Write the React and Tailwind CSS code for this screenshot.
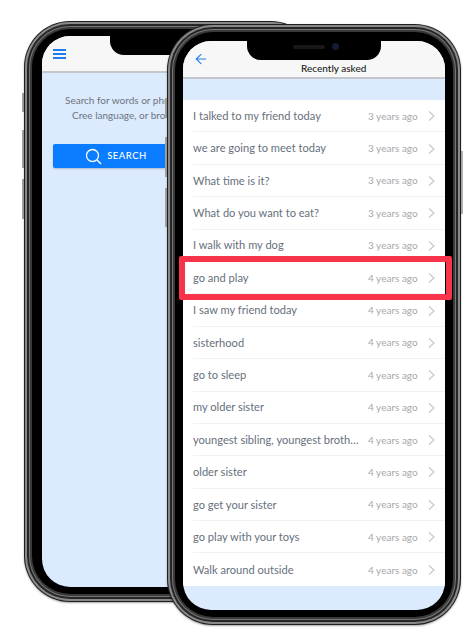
import React from 'react'
import { ArrowLeft } from 'lucide-react'

const rows = [
    ['I talked to my friend today', '3 years ago'],
    ['we are going to meet today', '3 years ago'],
    ['What time is it?', '3 years ago'],
    ['What do you want to eat?', '3 years ago'],
    ['I walk with my dog', '3 years ago'],
    ['go and play', '4 years ago'],
    ['I saw my friend today', '4 years ago'],
    ['sisterhood', '4 years ago'],
    ['go to sleep', '4 years ago'],
    ['my older sister', '4 years ago'],
    ['youngest sibling, youngest broth…', '4 years ago'],
    ['older sister', '4 years ago'],
    ['go get your sister', '4 years ago'],
    ['go play with your toys', '4 years ago'],
    ['Walk around outside', '4 years ago'],
]

const Frame = ({ className, bezel, children }) => (
    <div className={`absolute rounded-[46px] bg-[#1f1f1f] p-[1px] shadow-[0_1px_2px_rgba(0,0,0,0.35)] ${className}`}>
        <div className="h-full rounded-[45px] bg-[#8a8a8a] p-[2px]">
            <div className="h-full rounded-[43px] bg-[#262626] p-[2px]">
                <div className="h-full rounded-[41px] bg-[#777] p-[1px]">
                    <div className="h-full rounded-[40px] bg-[#3a3a3a] p-[2px]">
                        <div className={`h-full rounded-[38px] bg-black ${bezel}`}>
                            <div className="relative h-full overflow-hidden rounded-[28px] bg-[#dbeafd]">
                                {children}
                            </div>
                        </div>
                    </div>
                </div>
            </div>
        </div>
    </div>
)

const Notch = ({ className, children }) => (
    <div className={`absolute top-0 flex h-[19px] w-[134px] items-start justify-center rounded-b-[14px] bg-black ${className}`}>
        {children}
    </div>
)

const Row = ({ label, time, last }) => (
    <div className="flex h-[32.4px] items-center pl-[10px]">
        <div className={`flex h-full min-w-0 flex-1 items-center pr-[10px] pt-[1px] ${last ? '' : 'border-b border-[#f1f2f3]'}`}>
            <span className="min-w-0 flex-1 whitespace-nowrap text-[11.1px] text-[#66707c]">{label}</span>
            <span className="w-[60px] shrink-0 text-[10px] text-[#a6a8ab]">{time}</span>
            <svg width="7" height="10" viewBox="0 0 7 10" fill="none" stroke="#c6c7c9" strokeWidth="1.1" className="shrink-0">
                <path d="M1 .5 6 5 1 9.5" />
            </svg>
        </div>
    </div>
)

const BackPhone = () => (
    <Frame className="left-[24px] top-[21px] h-[581px] w-[293px]" bezel="px-[10px] py-[7px]">
        <div className="flex h-[37px] items-center border-b-2 border-[#c3c7cc] bg-[#f7f7f7] pl-[11px]">
            <div className="flex w-[13px] flex-col gap-[2px]">
                <div className="h-[2px] bg-[#1f7df0]"></div>
                <div className="h-[2px] bg-[#1f7df0]"></div>
                <div className="h-[2px] bg-[#1f7df0]"></div>
            </div>
        </div>
        <Notch className="left-[68px]" />
        <div className="flex flex-col pl-[11px]">
            <p className="mt-[20px] whitespace-nowrap text-[10px] leading-[15px] text-[#6b7480]">
                <span className="block pl-[12px]">Search for words or phrases</span>
                <span className="block pl-[19px]">Cree language, or browse</span>
            </p>
            <div className="mt-[21px] flex h-[24px] w-[126px] items-center justify-center gap-[5px] rounded-[2px] bg-[#0a7cff] text-white shadow-[0_1px_2px_rgba(0,0,0,0.2)]">
                <svg width="17" height="17" viewBox="0 0 17 17" fill="none" stroke="currentColor" strokeWidth="1.3">
                    <circle cx="7.5" cy="7.5" r="6" />
                    <path d="M12 12l4 4" strokeWidth="1.6" />
                </svg>
                <span className="text-[9.5px] font-medium tracking-[0.5px]">SEARCH</span>
            </div>
        </div>
    </Frame>
)

const FrontPhone = () => (
    <Frame className="left-[167px] top-[24px] h-[601px] w-[294px]" bezel="px-[8px] pb-[7px] pt-[9px]">
        <div className="flex h-[38px] items-center border-b-2 border-[#c3c7cc] bg-[#f7f7f7] pl-[10px]">
            <ArrowLeft size={16} strokeWidth={1.6} className="text-[#1f7df0]" />
            <h1 className="ml-[92px] mt-[18px] text-[10px] font-medium text-[#222]">Recently asked</h1>
        </div>
        <Notch className="left-[64px]">
            <div className="ml-[3px] mt-[4px] h-[4px] w-[32px] rounded-full bg-[#181818]"></div>
            <div className="ml-[7px] mt-[2px] h-[7px] w-[7px] rounded-full bg-[#141c33]"></div>
        </Notch>
        <div className="mt-[21px] bg-white">
            {rows.map((row, index) => (
                <Row key={row[0]} label={row[0]} time={row[1]} last={index === rows.length - 1} />
            ))}
        </div>
    </Frame>
)

const App = () => {
    return (
        <div className="relative h-[636px] w-[474px] overflow-hidden bg-white font-['Lato',sans-serif]">
            {/* side buttons of the back phone */}
            <div className="absolute left-[22px] top-[93px] h-[19px] w-[2px] bg-[#a5a5a5]"></div>
            <div className="absolute left-[22px] top-[130px] h-[38px] w-[2px] bg-[#a5a5a5]"></div>
            <div className="absolute left-[22px] top-[179px] h-[40px] w-[2px] bg-[#a5a5a5]"></div>
            <BackPhone />
            {/* side buttons of the front phone */}
            <div className="absolute left-[165px] top-[98px] h-[20px] w-[2px] bg-[#a5a5a5]"></div>
            <div className="absolute left-[165px] top-[137px] h-[40px] w-[2px] bg-[#a5a5a5]"></div>
            <div className="absolute left-[165px] top-[188px] h-[39px] w-[2px] bg-[#a5a5a5]"></div>
            <div className="absolute left-[461px] top-[151px] h-[63px] w-[2px] bg-[#b5b5b5]"></div>
            <FrontPhone />
            {/* highlight over the "go and play" row */}
            <div className="absolute left-[179px] top-[256px] h-[44px] w-[273px] rounded-[2px] border-[6.5px] border-[#f8344a]"></div>
        </div>
    )
}

export default App
